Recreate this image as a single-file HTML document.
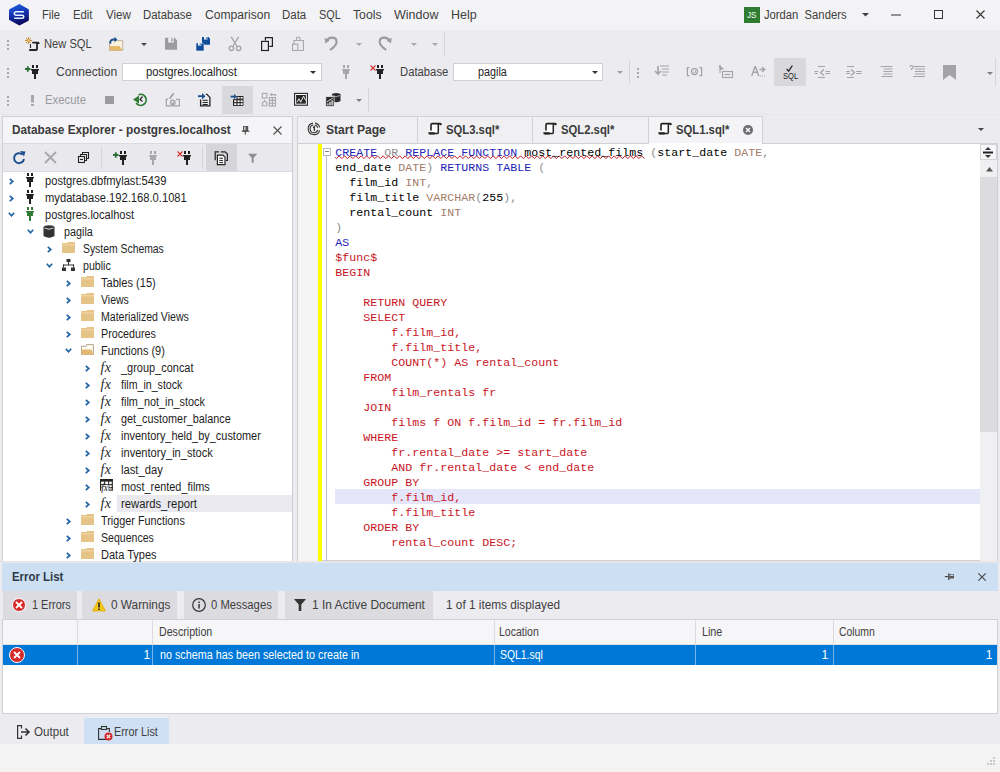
<!DOCTYPE html>
<html><head><meta charset="utf-8"><style>
html,body{margin:0;padding:0;}
body{width:1000px;height:772px;overflow:hidden;position:relative;background:#ececf0;font-family:"Liberation Sans",sans-serif;}
.a{position:absolute;}
.t{white-space:pre;line-height:1;}
svg{overflow:visible}
</style></head><body>
<div class="a" style="left:0px;top:0px;width:1000px;height:30px;background:#f3f3f5;"></div>
<svg class="a" style="left:7px;top:3px" width="24" height="24" viewBox="7 3 24 24"><defs><linearGradient id="lg" x1="0" y1="0" x2="0.3" y2="1"><stop offset="0" stop-color="#1f6ae8"/><stop offset="0.55" stop-color="#1630b0"/><stop offset="1" stop-color="#0b0b5e"/></linearGradient></defs><path d="M18.9,4.2 Q19.4,4 19.9,4.3 L28.5,9.3 Q28.9,9.6 28.9,10 V20 Q28.9,20.4 28.5,20.7 L19.4,25.6 L10.3,20.6 Q9,19.9 9,19.4 V10.3 Q9,9.6 9.5,9.3 Z" fill="url(#lg)"/><path d="M23.9,11.8 H16.2 Q14.3,11.8 14.3,13.6 Q14.3,15.2 16.2,15.2 H22 Q23.8,15.2 23.8,16.8 Q23.8,18.3 22,18.3 H14.2" fill="none" stroke="#e6f6ff" stroke-width="1.5"/></svg>
<div class="a" style="left:744px;top:7px;width:16px;height:16px;background:#2e7d32;"></div>
<svg class="a" style="left:862px;top:13px" width="7" height="4" viewBox="0 0 7 4"><polygon points="0,0 7,0 3.5,3.5" fill="#404040"/></svg>
<svg class="a" style="left:891px;top:14px" width="10" height="2" viewBox="0 0 10 2"><rect x="0" y="0.5" width="10" height="1" fill="#333"/></svg>
<svg class="a" style="left:934px;top:10px" width="9" height="9" viewBox="0 0 9 9"><rect x="0.5" y="0.5" width="8" height="8" fill="none" stroke="#333" stroke-width="1"/></svg>
<svg class="a" style="left:976px;top:10px" width="9" height="9" viewBox="0 0 9 9"><path d="M0.5,0.5 L8.5,8.5 M8.5,0.5 L0.5,8.5" stroke="#333" stroke-width="1.1"/></svg>
<svg class="a" style="left:7px;top:40px" width="2" height="10" viewBox="0 0 2 10"><rect x="0" y="0" width="2" height="2" fill="#a8a8ac"/><rect x="0" y="4" width="2" height="2" fill="#a8a8ac"/><rect x="0" y="8" width="2" height="2" fill="#a8a8ac"/></svg>
<svg class="a" style="left:22px;top:34px" width="20" height="20" viewBox="22 34 20 20"><g stroke="#c8892a" stroke-width="1"><path d="M28.4,37 V44 M25,40.5 H32 M26,38 L30.8,43 M30.8,38 L26,43"/></g><circle cx="28.4" cy="40.5" r="1" fill="#f3dca8"/><path d="M30.5,44.2 V48" stroke="#222" stroke-width="1.1"/><path d="M32.3,42.7 H38 Q38.8,42.7 38.8,44 M37,43 V49 Q37,50 36,50 H29.2" fill="none" stroke="#222" stroke-width="1.8"/></svg>
<svg class="a" style="left:106px;top:35px" width="20" height="18" viewBox="106 35 20 18"><path d="M109.5,41 V50.4 H122.7 V40.6 H116" fill="#fbf3e2" stroke="#b9ab8e" stroke-width="0.9"/><path d="M109.2,46 H119.5 L122.5,50.4 H110.5 Z" fill="#e3b96c"/><path d="M110.5,43.8 Q109.5,39.5 114,39.5 H115.5" fill="none" stroke="#1d4f8c" stroke-width="1.8"/><path d="M114.5,36.8 L117.3,39.6 L114.5,42.4 Z" fill="#1d4f8c"/></svg>
<svg class="a" style="left:140.5px;top:42.5px" width="6" height="3" viewBox="0 0 6 3"><polygon points="0,0 6,0 3,3" fill="#444"/></svg>
<svg class="a" style="left:163px;top:36px" width="16" height="16" viewBox="163 36 16 16"><path d="M165,37.7 H174.5 L177,40.2 V49.8 H165 Z" fill="#9c9ca0"/><rect x="168.2" y="37.7" width="5.5" height="4.9" fill="#ececf0"/><rect x="171.2" y="38.6" width="1.5" height="2.8" fill="#9c9ca0"/></svg>
<svg class="a" style="left:194px;top:35px" width="18" height="18" viewBox="194 35 18 18"><path d="M202,36.9 H208.5 L210,38.4 V44.8 H202 Z" fill="#0f4c9a"/><rect x="204" y="36.9" width="3.4" height="2.6" fill="#fff"/><rect x="205.7" y="37.3" width="1" height="1.6" fill="#0f4c9a"/><path d="M196,42.9 H202.5 L204,44.4 V50.9 H196 Z" fill="#0f4c9a" stroke="#ececf0" stroke-width="0.6"/><rect x="198" y="42.9" width="3.4" height="2.6" fill="#fff"/><rect x="199.7" y="43.3" width="1" height="1.6" fill="#0f4c9a"/></svg>
<svg class="a" style="left:228px;top:35px" width="14" height="17" viewBox="228 35 14 17"><g fill="none" stroke="#a4a4a8" stroke-width="1.3"><path d="M231.2,36.8 L237,46.5 M238.6,36.8 L232.8,46.5"/><circle cx="231.4" cy="48.3" r="2.2"/><circle cx="238.6" cy="48.3" r="2.2"/></g></svg>
<svg class="a" style="left:259px;top:35px" width="16" height="17" viewBox="259 35 16 17"><g fill="none" stroke="#222" stroke-width="1.2"><path d="M265.4,40.6 V37.6 H272.4 V46.4 H269.3"/><rect x="261.6" y="41.4" width="6.8" height="9.1"/></g></svg>
<svg class="a" style="left:290px;top:35px" width="16" height="17" viewBox="290 35 16 17"><g fill="none" stroke="#a8a8ac" stroke-width="1.1"><path d="M296.5,40.5 V38 Q296.5,37.3 297.5,37.3 H299 Q300,37.3 300,38 V40.5 M294,44 V40.5 H303.4 V50.5 H297.8"/><rect x="292.5" y="44.2" width="5.3" height="6.3"/></g></svg>
<svg class="a" style="left:321px;top:35px" width="20" height="18" viewBox="321 35 20 18"><path d="M326.5,40.8 Q328,37.6 332,37.6 Q336.6,37.6 336.6,42 Q336.6,45.5 330,50" fill="none" stroke="#9c9ca0" stroke-width="2.1"/><path d="M324.6,37.8 L329.6,40.6 L325.2,43.6 Z" fill="#9c9ca0"/></svg>
<svg class="a" style="left:355.5px;top:42.5px" width="6" height="3" viewBox="0 0 6 3"><polygon points="0,0 6,0 3,3" fill="#a8a8ac"/></svg>
<svg class="a" style="left:376px;top:35px" width="20" height="18" viewBox="376 35 20 18"><g transform="translate(716.25,0) scale(-1,1)"><path d="M326.5,40.8 Q328,37.6 332,37.6 Q336.6,37.6 336.6,42 Q336.6,45.5 330,50" fill="none" stroke="#9c9ca0" stroke-width="2.1"/><path d="M324.6,37.8 L329.6,40.6 L325.2,43.6 Z" fill="#9c9ca0"/></g></svg>
<svg class="a" style="left:411px;top:42.5px" width="6" height="3" viewBox="0 0 6 3"><polygon points="0,0 6,0 3,3" fill="#a8a8ac"/></svg>
<svg class="a" style="left:432px;top:42.5px" width="6" height="3" viewBox="0 0 6 3"><polygon points="0,0 6,0 3,3" fill="#a8a8ac"/></svg>
<div class="a" style="left:444px;top:32px;width:1px;height:24px;background:#d6d6da;"></div>
<svg class="a" style="left:7px;top:68px" width="2" height="10" viewBox="0 0 2 10"><rect x="0" y="0" width="2" height="2" fill="#a8a8ac"/><rect x="0" y="4" width="2" height="2" fill="#a8a8ac"/><rect x="0" y="8" width="2" height="2" fill="#a8a8ac"/></svg>
<svg class="a" style="left:31px;top:65px" width="8" height="14" viewBox="0 0 8 14"><g fill="#222"><rect x="1" y="0" width="2" height="3"/><rect x="5" y="0" width="2" height="3"/><rect x="0" y="4" width="8" height="1.4"/><rect x="1" y="4" width="6" height="5"/><rect x="3" y="9" width="2" height="5"/></g></svg>
<svg class="a" style="left:25px;top:65.5px" width="6" height="6" viewBox="0 0 6 6"><path d="M0,3 H5.6 M2.8,0.2 V5.8" stroke="#2e6e38" stroke-width="1.8"/></svg>
<div class="a" style="left:122px;top:63px;width:200px;height:18px;background:#ffffff;border:1px solid #d0d0d4;box-sizing:border-box;"></div>
<svg class="a" style="left:310px;top:71px" width="6" height="3" viewBox="0 0 6 3"><polygon points="0,0 6,0 3,3" fill="#333"/></svg>
<svg class="a" style="left:342px;top:65px" width="8" height="14" viewBox="0 0 8 14"><g fill="#a8a8ac"><rect x="1" y="0" width="2" height="3"/><rect x="5" y="0" width="2" height="3"/><rect x="0" y="4" width="8" height="1.4"/><rect x="1" y="4" width="6" height="5"/><rect x="3" y="9" width="2" height="5"/></g></svg>
<svg class="a" style="left:376px;top:65px" width="8" height="14" viewBox="0 0 8 14"><g fill="#222"><rect x="1" y="0" width="2" height="3"/><rect x="5" y="0" width="2" height="3"/><rect x="0" y="4" width="8" height="1.4"/><rect x="1" y="4" width="6" height="5"/><rect x="3" y="9" width="2" height="5"/></g></svg>
<svg class="a" style="left:370px;top:65px" width="6" height="6" viewBox="0 0 6 6"><path d="M0.5,0.5 L5.5,5.5 M5.5,0.5 L0.5,5.5" stroke="#d03030" stroke-width="1.1"/></svg>
<div class="a" style="left:453px;top:63px;width:150px;height:18px;background:#ffffff;border:1px solid #d0d0d4;box-sizing:border-box;"></div>
<svg class="a" style="left:591.5px;top:71px" width="6" height="3" viewBox="0 0 6 3"><polygon points="0,0 6,0 3,3" fill="#333"/></svg>
<svg class="a" style="left:617px;top:71px" width="6" height="3" viewBox="0 0 6 3"><polygon points="0,0 6,0 3,3" fill="#a0a0a4"/></svg>
<div class="a" style="left:629px;top:60px;width:1px;height:24px;background:#d6d6da;"></div>
<svg class="a" style="left:637px;top:68px" width="2" height="10" viewBox="0 0 2 10"><rect x="0" y="0" width="2" height="2" fill="#a8a8ac"/><rect x="0" y="4" width="2" height="2" fill="#a8a8ac"/><rect x="0" y="8" width="2" height="2" fill="#a8a8ac"/></svg>
<svg class="a" style="left:654px;top:65px" width="16" height="12" viewBox="0 0 16 12"><g stroke="#a4a4a8" stroke-width="1.2" fill="none"><path d="M6,1 H15 M8,4 H15 M8,7 H15 M8,10 H13"/><path d="M4,1 V9 M1,6 L4,9 L7,6" stroke-width="1.6"/></g></svg>
<svg class="a" style="left:685px;top:65px" width="18" height="13" viewBox="685 65 18 13"><g fill="none" stroke="#a0a0a4" stroke-width="1.2"><path d="M689.5,67.6 H687.4 V75.6 H689.5 M699.5,67.6 H701.6 V75.6 H699.5"/><circle cx="694.5" cy="71.6" r="3"/><path d="M693.5,71.6 A1,1 0 1 0 695.5,71.6 V70.4" stroke-width="1"/></g></svg>
<svg class="a" style="left:719px;top:65px" width="14" height="13" viewBox="0 0 14 13"><g stroke="#a4a4a8" stroke-width="1.1" fill="none"><path d="M1,0 V8"/><rect x="3.5" y="6.5" width="10" height="6"/><path d="M5.5,9.5 H11.5"/></g><path d="M0,0 L5,4 L1,5 Z" fill="#a4a4a8"/></svg>
<svg class="a" style="left:751px;top:66px" width="15" height="11" viewBox="0 0 15 11"><g fill="#a4a4a8"><path d="M0,10 L3.5,0 H5 L8.5,10 H7 L6,7 H2.5 L1.5,10 Z M3,5.5 H5.5 L4.2,2 Z"/><rect x="11" y="9.5" width="1" height="1"/><rect x="13" y="9.5" width="1" height="1"/><rect x="9" y="9.5" width="1" height="1"/></g><path d="M8.5,3.5 H13.5 M11,1 L13.8,3.5 L11,6" stroke="#a4a4a8" stroke-width="1.3" fill="none"/></svg>
<div class="a" style="left:774px;top:58px;width:32px;height:28px;background:#d9d9dd;"></div>
<svg class="a" style="left:785.5px;top:64.5px" width="7" height="7" viewBox="0 0 7 7"><path d="M0.6,3.8 L2.6,6.2 L6.4,0.5" fill="none" stroke="#222" stroke-width="1.3"/></svg>
<svg class="a" style="left:812px;top:62px" width="20" height="18" viewBox="812 62 20 18"><g stroke="#a4a4a8" stroke-width="1" fill="none"><path d="M818,66.5 H825 M814.5,71.5 H818 M814.5,73.5 H818 M825.5,71.5 H830 M825.5,73.5 H830 M818,77.5 H825"/><path d="M824,69.5 L820.5,72.5 L824,75.5" stroke-width="1.3"/></g></svg>
<svg class="a" style="left:844px;top:62px" width="20" height="18" viewBox="844 62 20 18"><g stroke="#a4a4a8" stroke-width="1" fill="none"><path d="M847,66.5 H854 M846,71.5 H850 M846,73.5 H850 M856,71.5 H861.5 M856,73.5 H861.5 M847,77.5 H854"/><path d="M851,69.5 L854.5,72.5 L851,75.5" stroke-width="1.3"/></g></svg>
<svg class="a" style="left:878px;top:62px" width="17" height="18" viewBox="878 62 17 18"><g stroke="#a4a4a8" stroke-width="1" fill="none"><path d="M880.5,66.5 H892.5 M883.5,69 H892.5 M883.5,71.5 H892.5 M883.5,74 H892.5 M881.5,76.5 H892.5"/></g></svg>
<svg class="a" style="left:907px;top:62px" width="20" height="18" viewBox="907 62 20 18"><g stroke="#a4a4a8" stroke-width="1" fill="none"><path d="M914,66.5 H925 M915,69 H925 M915,71.5 H925 M915,74 H925 M913,76.5 H925"/><path d="M910,67 Q910,65.5 911.6,65.5 Q913.2,65.5 913.2,67 Q913.2,68.2 911.6,68.8 V70" stroke-width="1.2"/></g></svg>
<svg class="a" style="left:943px;top:65px" width="13" height="15" viewBox="0 0 13 15"><path d="M0,0 H13 V15 L6.5,10 L0,15 Z" fill="#a4a4a8"/></svg>
<svg class="a" style="left:987px;top:71.5px" width="6" height="3" viewBox="0 0 6 3"><polygon points="0,0 6,0 3,3" fill="#808084"/></svg>
<div class="a" style="left:995px;top:58px;width:1px;height:28px;background:#d6d6da;"></div>
<svg class="a" style="left:7px;top:95.5px" width="2" height="10" viewBox="0 0 2 10"><rect x="0" y="0" width="2" height="2" fill="#a8a8ac"/><rect x="0" y="4" width="2" height="2" fill="#a8a8ac"/><rect x="0" y="8" width="2" height="2" fill="#a8a8ac"/></svg>
<svg class="a" style="left:30.5px;top:94.5px" width="3" height="11" viewBox="0 0 3 11"><rect x="0" y="0" width="3" height="7.5" fill="#a8a8ac"/><rect x="0" y="9" width="3" height="2" fill="#a8a8ac"/></svg>
<div class="a" style="left:104.5px;top:95.8px;width:9px;height:8.5px;background:#9c9ca0;"></div>
<svg class="a" style="left:133px;top:92.5px" width="16" height="13" viewBox="0 0 16 13"><path d="M5.5,1.8 A5.5,5.5 0 1 1 3.2,10" fill="none" stroke="#2f7d32" stroke-width="1.8"/><polygon points="0,6.5 6,2.5 6,10.5" fill="#2f7d32"/><path d="M9.5,3.5 L7,6.5 L9.5,8.5" fill="none" stroke="#222" stroke-width="1.2"/></svg>
<svg class="a" style="left:164px;top:90px" width="18" height="18" viewBox="164 90 18 18"><g fill="none" stroke="#a4a4a8" stroke-width="1.2"><path d="M168,99.3 H166.3 V105.8 H179.4 V99.3 H176"/><circle cx="172.8" cy="102.5" r="2.3"/><path d="M171.8,102.5 A1,1 0 1 0 173.8,102.5 V101.8"/></g><path d="M169.5,98.8 L173.8,93.2" stroke="#a4a4a8" stroke-width="1.8"/></svg>
<svg class="a" style="left:196px;top:91px" width="17" height="17" viewBox="196 91 17 17"><path d="M198,96.2 H202.5" stroke="#1d4f8c" stroke-width="1.9"/><path d="M202,93 L205.5,96.2 L202,99.4 Z" fill="#1d4f8c"/><g fill="none" stroke="#222" stroke-width="1.3"><path d="M200.6,99.5 V105.8 H209.9 V97.4 L207,94.4 H205.8"/><path d="M202.6,100.3 H207.8 M202.6,102.5 H207.8 M202.6,104.5 H207.8" stroke-width="1"/></g></svg>
<div class="a" style="left:222px;top:86px;width:31px;height:28px;background:#d9d9dd;"></div>
<svg class="a" style="left:228px;top:90px" width="18" height="18" viewBox="228 90 18 18"><g fill="#222"><path d="M233,99.2 H243.4 V105.9 H233 Z"/><path d="M236.6,96 H243.4 V99.5 H236.6 Z"/></g><g fill="#fff"><rect x="237.6" y="97" width="2" height="1.6"/><rect x="240.6" y="97" width="2" height="1.6"/><rect x="234.2" y="100.3" width="2.2" height="1.8"/><rect x="237.6" y="100.3" width="2" height="1.8"/><rect x="240.6" y="100.3" width="2" height="1.8"/><rect x="234.2" y="103.2" width="2.2" height="1.8"/><rect x="237.6" y="103.2" width="2" height="1.8"/><rect x="240.6" y="103.2" width="2" height="1.8"/></g><path d="M230.6,96.6 H234.6" stroke="#1d4f8c" stroke-width="1.8"/><path d="M234,94 L237,96.6 L234,99.2 Z" fill="#1d4f8c"/></svg>
<svg class="a" style="left:260px;top:91px" width="18" height="17" viewBox="260 91 18 17"><g fill="none" stroke="#a8a8ac" stroke-width="1.1"><rect x="262.3" y="93.4" width="4.6" height="4.6"/><path d="M264.6,99.8 V101 M262.3,105.8 V103 L264.6,101 L266.9,103 V105.8 Z"/><rect x="269.3" y="97.6" width="6.2" height="8.4"/><path d="M269.3,100.4 H275.5 M269.3,103.2 H275.5 M272.4,97.6 V106 M271,94.6 H275.5 V96 M272,93.4 L270.6,94.6 L272,95.8"/></g></svg>
<svg class="a" style="left:292px;top:91px" width="18" height="17" viewBox="292 91 18 17"><rect x="294.6" y="93.4" width="12.8" height="11.8" fill="#fff" stroke="#222" stroke-width="1.1"/><rect x="296.1" y="95" width="9.8" height="8.7" fill="#2a2a2a"/><path d="M297,102.2 L299,98.8 L300.6,102.2 L303.6,96.2 L305.6,100.4" fill="none" stroke="#fff" stroke-width="0.9"/></svg>
<svg class="a" style="left:324px;top:91px" width="18" height="17" viewBox="324 91 18 17"><ellipse cx="336.2" cy="94.8" rx="4.3" ry="1.8" fill="#2a2a2a"/><path d="M331.9,94.8 V101 Q336.2,103.4 340.5,101 V94.8 Z" fill="#2a2a2a"/><path d="M332.3,95.6 Q336.2,97.6 340.1,95.6" fill="none" stroke="#fff" stroke-width="0.6"/><rect x="325.8" y="96.6" width="8.3" height="10" fill="#2a2a2a" stroke="#ececf0" stroke-width="0.8"/><g fill="#fff"><rect x="327.3" y="103.4" width="1.2" height="2"/><rect x="329.4" y="101.8" width="1.2" height="3.6"/><rect x="331.5" y="100.2" width="1.2" height="5.2"/></g><path d="M327,101.8 L332.8,98" stroke="#fff" stroke-width="0.8"/></svg>
<svg class="a" style="left:355.5px;top:99px" width="6" height="3" viewBox="0 0 6 3"><polygon points="0,0 6,0 3,3" fill="#808084"/></svg>
<div class="a" style="left:368px;top:88px;width:1px;height:24px;background:#d6d6da;"></div>
<div class="a" style="left:0px;top:114px;width:1000px;height:1px;background:#e8e8ec;"></div>
<div class="a" style="left:2px;top:116px;width:291px;height:446px;background:#ffffff;border:1px solid #d0d0d4;box-sizing:border-box;"></div>
<div class="a" style="left:3px;top:117px;width:289px;height:26px;background:#f5f5f8;"></div>
<svg class="a" style="left:240px;top:124px" width="12" height="12" viewBox="240 124 12 12"><rect x="243" y="126" width="5.2" height="5" fill="#555"/><rect x="244.3" y="126.8" width="1.2" height="3.5" fill="#f5f5f8"/><rect x="241.8" y="130.6" width="7.5" height="1.2" fill="#444"/><rect x="244.7" y="131" width="1.1" height="3.5" fill="#444"/></svg>
<svg class="a" style="left:273px;top:126px" width="9" height="9" viewBox="0 0 9 9"><path d="M0.5,0.5 L8.5,8.5 M8.5,0.5 L0.5,8.5" stroke="#555" stroke-width="1.2"/></svg>
<div class="a" style="left:3px;top:143px;width:289px;height:29px;background:#e9e9ed;"></div>
<div class="a" style="left:3px;top:143px;width:289px;height:1px;background:#dcdce0;"></div>
<div class="a" style="left:3px;top:171px;width:289px;height:1px;background:#dcdce0;"></div>
<svg class="a" style="left:12.5px;top:151px" width="13" height="14" viewBox="0 0 13 14"><path d="M9.5,3.5 A5,5 0 1 0 11,8" fill="none" stroke="#1d4f8e" stroke-width="2"/><polygon points="7,0 12.5,0.5 11,5.5" fill="#1d4f8e"/></svg>
<svg class="a" style="left:43.5px;top:151px" width="13" height="13" viewBox="0 0 13 13"><path d="M1,1 L12,12 M12,1 L1,12" stroke="#a8a8ac" stroke-width="1.8"/></svg>
<svg class="a" style="left:78px;top:152px" width="11" height="11" viewBox="0 0 11 11"><g fill="none" stroke="#222" stroke-width="1.1"><rect x="0.5" y="4.5" width="6" height="6"/><path d="M2.5,4.5 V2.5 H8.5 V8.5 H6.5 M4.5,2.5 V0.5 H10.5 V6.5 H8.5"/><path d="M2,7.5 H5"/></g></svg>
<div class="a" style="left:101px;top:146px;width:1px;height:23px;background:#d6d6da;"></div>
<svg class="a" style="left:119px;top:151px" width="8" height="14" viewBox="0 0 8 14"><g fill="#222"><rect x="1" y="0" width="2" height="3"/><rect x="5" y="0" width="2" height="3"/><rect x="0" y="4" width="8" height="1.4"/><rect x="1" y="4" width="6" height="5"/><rect x="3" y="9" width="2" height="5"/></g></svg>
<svg class="a" style="left:113px;top:151.5px" width="6" height="6" viewBox="0 0 6 6"><path d="M0,3 H5.6 M2.8,0.2 V5.8" stroke="#2e6e38" stroke-width="1.8"/></svg>
<svg class="a" style="left:148.5px;top:151px" width="8" height="14" viewBox="0 0 8 14"><g fill="#a8a8ac"><rect x="1" y="0" width="2" height="3"/><rect x="5" y="0" width="2" height="3"/><rect x="0" y="4" width="8" height="1.4"/><rect x="1" y="4" width="6" height="5"/><rect x="3" y="9" width="2" height="5"/></g></svg>
<svg class="a" style="left:183px;top:151px" width="8" height="14" viewBox="0 0 8 14"><g fill="#222"><rect x="1" y="0" width="2" height="3"/><rect x="5" y="0" width="2" height="3"/><rect x="0" y="4" width="8" height="1.4"/><rect x="1" y="4" width="6" height="5"/><rect x="3" y="9" width="2" height="5"/></g></svg>
<svg class="a" style="left:177px;top:151px" width="6" height="6" viewBox="0 0 6 6"><path d="M0.5,0.5 L5.5,5.5 M5.5,0.5 L0.5,5.5" stroke="#d03030" stroke-width="1.1"/></svg>
<div class="a" style="left:202px;top:146px;width:1px;height:23px;background:#d6d6da;"></div>
<div class="a" style="left:205.5px;top:144px;width:31px;height:27px;background:#d6d6da;"></div>
<svg class="a" style="left:212px;top:149px" width="18" height="18" viewBox="212 149 18 18"><g fill="none" stroke="#222" stroke-width="1.2"><path d="M215.2,160.2 V151.8 H218.9 M220.8,151.8 H225 L227.4,154 V160.5 H226"/></g><path d="M217.4,155.2 H223 L225,157.2 V164.6 H217.4 Z" fill="#fff" stroke="#222" stroke-width="1.2"/><path d="M219.3,158.2 H223 M219.3,160.4 H223 M219.3,162.6 H223" stroke="#222" stroke-width="1"/></svg>
<svg class="a" style="left:246px;top:152px" width="13" height="13" viewBox="246 152 13 13"><path d="M248.1,153.8 H257.2 L253.6,158 V162.8 H251.7 V158 Z" fill="#8e8e92"/></svg>
<svg class="a" style="left:9px;top:177.5px" width="5" height="7" viewBox="0 0 5 7"><path d="M0.8,0.8 L3.8,3.5 L0.8,6.2" fill="none" stroke="#1f65a8" stroke-width="1.7"/></svg>
<svg class="a" style="left:26px;top:173px" width="8" height="14" viewBox="0 0 8 14"><g fill="#222"><rect x="1" y="0" width="2" height="3"/><rect x="5" y="0" width="2" height="3"/><rect x="0" y="4" width="8" height="1.4"/><rect x="1" y="4" width="6" height="5"/><rect x="3" y="9" width="2" height="5"/></g></svg>
<svg class="a" style="left:9px;top:194.5px" width="5" height="7" viewBox="0 0 5 7"><path d="M0.8,0.8 L3.8,3.5 L0.8,6.2" fill="none" stroke="#1f65a8" stroke-width="1.7"/></svg>
<svg class="a" style="left:26px;top:190px" width="8" height="14" viewBox="0 0 8 14"><g fill="#222"><rect x="1" y="0" width="2" height="3"/><rect x="5" y="0" width="2" height="3"/><rect x="0" y="4" width="8" height="1.4"/><rect x="1" y="4" width="6" height="5"/><rect x="3" y="9" width="2" height="5"/></g></svg>
<svg class="a" style="left:8px;top:212px" width="7" height="5" viewBox="0 0 7 5"><path d="M0.8,0.8 L3.5,3.8 L6.2,0.8" fill="none" stroke="#1f65a8" stroke-width="1.7"/></svg>
<svg class="a" style="left:26px;top:207px" width="8" height="14" viewBox="0 0 8 14"><g fill="#2f7a35"><rect x="1" y="0" width="2" height="3"/><rect x="5" y="0" width="2" height="3"/><rect x="0" y="4" width="8" height="1.4"/><rect x="1" y="4" width="6" height="5"/><rect x="3" y="9" width="2" height="5"/></g></svg>
<svg class="a" style="left:27px;top:229px" width="7" height="5" viewBox="0 0 7 5"><path d="M0.8,0.8 L3.5,3.8 L6.2,0.8" fill="none" stroke="#1f65a8" stroke-width="1.7"/></svg>
<svg class="a" style="left:43px;top:225px" width="12" height="14" viewBox="0 0 12 14"><ellipse cx="6" cy="2.5" rx="5.5" ry="2.3" fill="#333"/><path d="M0.5,2.5 V11 Q6,14.5 11.5,11 V2.5 Q6,6 0.5,2.5 Z" fill="#333"/><path d="M1.5,3 Q6,5.5 10.5,3" stroke="#fff" stroke-width="0.8" fill="none"/></svg>
<svg class="a" style="left:47px;top:245.5px" width="5" height="7" viewBox="0 0 5 7"><path d="M0.8,0.8 L3.8,3.5 L0.8,6.2" fill="none" stroke="#1f65a8" stroke-width="1.7"/></svg>
<svg class="a" style="left:61.8px;top:242.2px" width="13" height="11" viewBox="0 0 13 11"><path d="M0,1 H5 L6,0 H13 V11 H0 Z" fill="#e6c387"/><rect x="0" y="2.5" width="13" height="0.8" fill="#f3dfb5"/></svg>
<svg class="a" style="left:46px;top:263px" width="7" height="5" viewBox="0 0 7 5"><path d="M0.8,0.8 L3.5,3.8 L6.2,0.8" fill="none" stroke="#1f65a8" stroke-width="1.7"/></svg>
<svg class="a" style="left:62px;top:259px" width="13" height="12" viewBox="0 0 13 12"><g fill="#333"><rect x="4.5" y="0" width="4" height="3"/><rect x="6" y="3" width="1" height="3"/><rect x="1" y="5.5" width="11" height="1"/><rect x="1" y="5.5" width="1" height="3"/><rect x="11" y="5.5" width="1" height="3"/><rect x="0" y="8.5" width="4" height="3.5"/><rect x="9" y="8.5" width="4" height="3.5"/></g></svg>
<svg class="a" style="left:66px;top:279.5px" width="5" height="7" viewBox="0 0 5 7"><path d="M0.8,0.8 L3.8,3.5 L0.8,6.2" fill="none" stroke="#1f65a8" stroke-width="1.7"/></svg>
<svg class="a" style="left:80.8px;top:276.2px" width="13" height="11" viewBox="0 0 13 11"><path d="M0,1 H5 L6,0 H13 V11 H0 Z" fill="#e6c387"/><rect x="0" y="2.5" width="13" height="0.8" fill="#f3dfb5"/></svg>
<svg class="a" style="left:66px;top:296.5px" width="5" height="7" viewBox="0 0 5 7"><path d="M0.8,0.8 L3.8,3.5 L0.8,6.2" fill="none" stroke="#1f65a8" stroke-width="1.7"/></svg>
<svg class="a" style="left:80.8px;top:293.2px" width="13" height="11" viewBox="0 0 13 11"><path d="M0,1 H5 L6,0 H13 V11 H0 Z" fill="#e6c387"/><rect x="0" y="2.5" width="13" height="0.8" fill="#f3dfb5"/></svg>
<svg class="a" style="left:66px;top:313.5px" width="5" height="7" viewBox="0 0 5 7"><path d="M0.8,0.8 L3.8,3.5 L0.8,6.2" fill="none" stroke="#1f65a8" stroke-width="1.7"/></svg>
<svg class="a" style="left:80.8px;top:310.2px" width="13" height="11" viewBox="0 0 13 11"><path d="M0,1 H5 L6,0 H13 V11 H0 Z" fill="#e6c387"/><rect x="0" y="2.5" width="13" height="0.8" fill="#f3dfb5"/></svg>
<svg class="a" style="left:66px;top:330.5px" width="5" height="7" viewBox="0 0 5 7"><path d="M0.8,0.8 L3.8,3.5 L0.8,6.2" fill="none" stroke="#1f65a8" stroke-width="1.7"/></svg>
<svg class="a" style="left:80.8px;top:327.2px" width="13" height="11" viewBox="0 0 13 11"><path d="M0,1 H5 L6,0 H13 V11 H0 Z" fill="#e6c387"/><rect x="0" y="2.5" width="13" height="0.8" fill="#f3dfb5"/></svg>
<svg class="a" style="left:65px;top:348px" width="7" height="5" viewBox="0 0 7 5"><path d="M0.8,0.8 L3.5,3.8 L6.2,0.8" fill="none" stroke="#1f65a8" stroke-width="1.7"/></svg>
<svg class="a" style="left:80.8px;top:344.2px" width="13" height="11" viewBox="0 0 13 11"><path d="M0.5,2.3 H5 L5.6,0.6 H12.4 V10.4 H0.5 Z" fill="#fffdf6" stroke="#a89a80" stroke-width="0.9"/><path d="M0,5.6 H10.5 L12.4,10.8 H0.8 Z" fill="#e3b872"/></svg>
<svg class="a" style="left:85px;top:364.5px" width="5" height="7" viewBox="0 0 5 7"><path d="M0.8,0.8 L3.8,3.5 L0.8,6.2" fill="none" stroke="#1f65a8" stroke-width="1.7"/></svg>
<svg class="a" style="left:85px;top:381.5px" width="5" height="7" viewBox="0 0 5 7"><path d="M0.8,0.8 L3.8,3.5 L0.8,6.2" fill="none" stroke="#1f65a8" stroke-width="1.7"/></svg>
<svg class="a" style="left:85px;top:398.5px" width="5" height="7" viewBox="0 0 5 7"><path d="M0.8,0.8 L3.8,3.5 L0.8,6.2" fill="none" stroke="#1f65a8" stroke-width="1.7"/></svg>
<svg class="a" style="left:85px;top:415.5px" width="5" height="7" viewBox="0 0 5 7"><path d="M0.8,0.8 L3.8,3.5 L0.8,6.2" fill="none" stroke="#1f65a8" stroke-width="1.7"/></svg>
<svg class="a" style="left:85px;top:432.5px" width="5" height="7" viewBox="0 0 5 7"><path d="M0.8,0.8 L3.8,3.5 L0.8,6.2" fill="none" stroke="#1f65a8" stroke-width="1.7"/></svg>
<svg class="a" style="left:85px;top:449.5px" width="5" height="7" viewBox="0 0 5 7"><path d="M0.8,0.8 L3.8,3.5 L0.8,6.2" fill="none" stroke="#1f65a8" stroke-width="1.7"/></svg>
<svg class="a" style="left:85px;top:466.5px" width="5" height="7" viewBox="0 0 5 7"><path d="M0.8,0.8 L3.8,3.5 L0.8,6.2" fill="none" stroke="#1f65a8" stroke-width="1.7"/></svg>
<svg class="a" style="left:85px;top:483.5px" width="5" height="7" viewBox="0 0 5 7"><path d="M0.8,0.8 L3.8,3.5 L0.8,6.2" fill="none" stroke="#1f65a8" stroke-width="1.7"/></svg>
<svg class="a" style="left:100px;top:479.1px" width="13" height="12" viewBox="0 0 13 12"><g fill="#222"><rect x="0" y="0" width="12.8" height="2.6"/><rect x="0" y="0" width="1.1" height="11.4"/><rect x="11.7" y="0" width="1.1" height="11.4"/><rect x="0" y="5.2" width="12.8" height="1"/><rect x="0" y="8.2" width="12.8" height="1"/><rect x="0" y="10.6" width="12.8" height="1"/><rect x="4.2" y="0" width="1" height="11.4"/><rect x="8.2" y="0" width="1" height="11.4"/></g><path d="M2.2,6.2 H8.6 V12.6 H1 Z" fill="#fff"/><text x="1.2" y="11.8" font-family="Liberation Serif" font-style="italic" font-size="9.5" fill="#111">fx</text></svg>
<div class="a" style="left:117px;top:495px;width:175px;height:17px;background:#e9e9ef;"></div>
<svg class="a" style="left:85px;top:500.5px" width="5" height="7" viewBox="0 0 5 7"><path d="M0.8,0.8 L3.8,3.5 L0.8,6.2" fill="none" stroke="#1f65a8" stroke-width="1.7"/></svg>
<svg class="a" style="left:66px;top:517.5px" width="5" height="7" viewBox="0 0 5 7"><path d="M0.8,0.8 L3.8,3.5 L0.8,6.2" fill="none" stroke="#1f65a8" stroke-width="1.7"/></svg>
<svg class="a" style="left:80.8px;top:514.2px" width="13" height="11" viewBox="0 0 13 11"><path d="M0,1 H5 L6,0 H13 V11 H0 Z" fill="#e6c387"/><rect x="0" y="2.5" width="13" height="0.8" fill="#f3dfb5"/></svg>
<svg class="a" style="left:66px;top:534.5px" width="5" height="7" viewBox="0 0 5 7"><path d="M0.8,0.8 L3.8,3.5 L0.8,6.2" fill="none" stroke="#1f65a8" stroke-width="1.7"/></svg>
<svg class="a" style="left:80.8px;top:531.2px" width="13" height="11" viewBox="0 0 13 11"><path d="M0,1 H5 L6,0 H13 V11 H0 Z" fill="#e6c387"/><rect x="0" y="2.5" width="13" height="0.8" fill="#f3dfb5"/></svg>
<svg class="a" style="left:66px;top:551.5px" width="5" height="7" viewBox="0 0 5 7"><path d="M0.8,0.8 L3.8,3.5 L0.8,6.2" fill="none" stroke="#1f65a8" stroke-width="1.7"/></svg>
<svg class="a" style="left:80.8px;top:548.2px" width="13" height="11" viewBox="0 0 13 11"><path d="M0,1 H5 L6,0 H13 V11 H0 Z" fill="#e6c387"/><rect x="0" y="2.5" width="13" height="0.8" fill="#f3dfb5"/></svg>
<div class="a" style="left:297px;top:116px;width:121px;height:28px;background:#f0f0f3;border:1px solid #d2d2d6;box-sizing:border-box;"></div>
<div class="a" style="left:417px;top:116px;width:116px;height:28px;background:#f0f0f3;border:1px solid #d2d2d6;box-sizing:border-box;"></div>
<div class="a" style="left:532px;top:116px;width:117px;height:28px;background:#f0f0f3;border:1px solid #d2d2d6;box-sizing:border-box;"></div>
<div class="a" style="left:648px;top:116px;width:115px;height:28px;background:#f4f4f6;border:1px solid #d2d2d6;box-sizing:border-box;border-bottom:none;"></div>
<svg class="a" style="left:306px;top:121px" width="16" height="16" viewBox="306 121 16 16"><g fill="none" stroke="#333" stroke-width="1.1"><path d="M319.6,130.3 A5.8,5.8 0 1 1 313,123.1 M315,123.1 A5.8,5.8 0 0 1 319.6,127.3 M317.77,129.81 A3.9,3.9 0 1 1 313.32,124.96 M314.68,124.96 A3.9,3.9 0 0 1 317.77,127.79"/><path d="M313,127.6 L314.4,126.8 V131" stroke-width="1.3"/></g></svg>
<svg class="a" style="left:425px;top:119px" width="20" height="20" viewBox="0 0 20 20"><g transform="translate(-425,-119)"><rect x="431.5" y="124.4" width="6.5" height="8.2" fill="#ffffff"/><path d="M431,130.4 V124.8 Q431,123.6 432.2,123.6 H440.6" fill="none" stroke="#222" stroke-width="1.6"/><circle cx="440.6" cy="124.1" r="1.2" fill="#222"/><path d="M438.3,123.6 V132.6 Q438.3,133.5 437.4,133.5 H430" fill="none" stroke="#222" stroke-width="1.5"/><path d="M428.4,132.3 H434.6 V134.6 H429.6 Q428.4,134.6 428.4,133.5 Z" fill="#222"/></g></svg>
<svg class="a" style="left:540px;top:119px" width="20" height="20" viewBox="0 0 20 20"><g transform="translate(-425,-119)"><rect x="431.5" y="124.4" width="6.5" height="8.2" fill="#ffffff"/><path d="M431,130.4 V124.8 Q431,123.6 432.2,123.6 H440.6" fill="none" stroke="#222" stroke-width="1.6"/><circle cx="440.6" cy="124.1" r="1.2" fill="#222"/><path d="M438.3,123.6 V132.6 Q438.3,133.5 437.4,133.5 H430" fill="none" stroke="#222" stroke-width="1.5"/><path d="M428.4,132.3 H434.6 V134.6 H429.6 Q428.4,134.6 428.4,133.5 Z" fill="#222"/></g></svg>
<svg class="a" style="left:654.5px;top:119px" width="20" height="20" viewBox="0 0 20 20"><g transform="translate(-425,-119)"><rect x="431.5" y="124.4" width="6.5" height="8.2" fill="#ffffff"/><path d="M431,130.4 V124.8 Q431,123.6 432.2,123.6 H440.6" fill="none" stroke="#222" stroke-width="1.6"/><circle cx="440.6" cy="124.1" r="1.2" fill="#222"/><path d="M438.3,123.6 V132.6 Q438.3,133.5 437.4,133.5 H430" fill="none" stroke="#222" stroke-width="1.5"/><path d="M428.4,132.3 H434.6 V134.6 H429.6 Q428.4,134.6 428.4,133.5 Z" fill="#222"/></g></svg>
<svg class="a" style="left:743px;top:125px" width="10" height="10" viewBox="0 0 10 10"><circle cx="5" cy="5" r="5" fill="#6e6e72"/><path d="M3,3 L7,7 M7,3 L3,7" stroke="#fff" stroke-width="1.2"/></svg>
<svg class="a" style="left:978px;top:128px" width="6" height="3" viewBox="0 0 6 3"><polygon points="0,0 6,0 3,3" fill="#444"/></svg>
<div class="a" style="left:297px;top:143px;width:701px;height:418px;background:#ffffff;border:1px solid #d0d0d4;box-sizing:border-box;"></div>
<div class="a" style="left:649px;top:143px;width:113px;height:1px;background:#ffffff;"></div>
<div class="a" style="left:298px;top:144px;width:20px;height:417px;background:#f5f5f5;"></div>
<div class="a" style="left:318px;top:144px;width:4px;height:417px;background:#ffff00;"></div>
<div class="a" style="left:326px;top:156px;width:1px;height:405px;background:#c0c0c4;"></div>
<div class="a" style="left:322.5px;top:147.5px;width:8px;height:8px;background:#ffffff;border:1px solid #b8b8bc;box-sizing:border-box;"></div>
<div class="a" style="left:324.5px;top:151px;width:4px;height:1px;background:#808084;"></div>
<div class="a" style="left:335px;top:489px;width:645px;height:15px;background:#e6e6fa;"></div>
<div class="a" style="left:980px;top:144px;width:17px;height:16px;background:#f7f7f9;border:1px solid #d4d4d8;box-sizing:border-box;"></div>
<svg class="a" style="left:983px;top:147px" width="10" height="11" viewBox="0 0 10 11"><polygon points="5,0 8,3 2,3" fill="#333"/><rect x="0" y="4.5" width="10" height="2" fill="#222"/><polygon points="5,11 8,8 2,8" fill="#333"/></svg>
<div class="a" style="left:980px;top:160px;width:17px;height:401px;background:#f0f0f2;"></div>
<svg class="a" style="left:985.5px;top:166.5px" width="7" height="4.5" viewBox="0 0 7 4.5"><polygon points="3.5,0 7,4.5 0,4.5" fill="#555"/></svg>
<div class="a" style="left:980px;top:177px;width:17px;height:255px;background:#dcdcde;"></div>
<svg class="a" style="left:0px;top:0px" width="1000" height="200" viewBox="0 0 1000 200"><path d="M335,157.2 L336.38,158.6L339.12,155.8L341.88,158.6L344.62,155.8L347.38,158.6L350.12,155.8L352.88,158.6L355.62,155.8L358.38,158.6L361.12,155.8L363.88,158.6L366.62,155.8L369.38,158.6L372.12,155.8L374.88,158.6L377.62,155.8L380.38,158.6L383.12,155.8L385.88,158.6L388.62,155.8L391.38,158.6L394.12,155.8L396.88,158.6L399.62,155.8L402.38,158.6L405.12,155.8L407.88,158.6L410.62,155.8L413.38,158.6L416.12,155.8L418.88,158.6L421.62,155.8L424.38,158.6L427.12,155.8L429.88,158.6L432.62,155.8L435.38,158.6L438.12,155.8L440.88,158.6L443.62,155.8L446.38,158.6L449.12,155.8L451.88,158.6L454.62,155.8L457.38,158.6L460.12,155.8L462.88,158.6L465.62,155.8L468.38,158.6L471.12,155.8L473.88,158.6L476.62,155.8L479.38,158.6L482.12,155.8L484.88,158.6L487.62,155.8L490.38,158.6L493.12,155.8L495.88,158.6L498.62,155.8L501.38,158.6L504.12,155.8L506.88,158.6L509.62,155.8L512.38,158.6L515.12,155.8L517.88,158.6L520.62,155.8L523.38,158.6L526.12,155.8L528.88,158.6L531.62,155.8L534.38,158.6L537.12,155.8L539.88,158.6L542.62,155.8L545.38,158.6L548.12,155.8L550.88,158.6L553.62,155.8L556.38,158.6L559.12,155.8L561.88,158.6L564.62,155.8L567.38,158.6L570.12,155.8L572.88,158.6L575.62,155.8L578.38,158.6L581.12,155.8L583.88,158.6L586.62,155.8L589.38,158.6L592.12,155.8L594.88,158.6L597.62,155.8L600.38,158.6L603.12,155.8L605.88,158.6L608.62,155.8L611.38,158.6L614.12,155.8L616.88,158.6L619.62,155.8L622.38,158.6L625.12,155.8L627.88,158.6L630.62,155.8L633.38,158.6L636.12,155.8L638.88,158.6L641.62,155.8L644.38,158.6" fill="none" stroke="#c01e28" stroke-width="1"/></svg>
<div class="a" style="left:0px;top:561px;width:1000px;height:2px;background:#e6e6ea;"></div>
<div class="a" style="left:2px;top:563px;width:996px;height:28px;background:#cddff3;"></div>
<svg class="a" style="left:943px;top:572px" width="14" height="10" viewBox="943 572 14 10"><path d="M944.8,576.6 H948.5" stroke="#444" stroke-width="1.1"/><rect x="948.2" y="573.4" width="1.3" height="6.6" fill="#444"/><rect x="949.5" y="574.3" width="4.4" height="4.2" fill="#555"/><rect x="950.3" y="575" width="3" height="1" fill="#cddff3"/></svg>
<svg class="a" style="left:978px;top:573px" width="8" height="8" viewBox="0 0 8 8"><path d="M0.3,0.3 L7.7,7.7 M7.7,0.3 L0.3,7.7" stroke="#4a4a4a" stroke-width="1.2"/></svg>
<div class="a" style="left:2px;top:591px;width:996px;height:28px;background:#ececf0;"></div>
<div class="a" style="left:3px;top:591px;width:74px;height:28px;background:#dcdce0;"></div>
<div class="a" style="left:82px;top:591px;width:95px;height:28px;background:#dcdce0;"></div>
<div class="a" style="left:184px;top:591px;width:94px;height:28px;background:#dcdce0;"></div>
<div class="a" style="left:285px;top:591px;width:148px;height:28px;background:#dcdce0;"></div>
<svg class="a" style="left:12px;top:598px" width="14" height="14" viewBox="0 0 14 14"><circle cx="7" cy="7" r="6.5" fill="#d42a2a" stroke="#ffffff" stroke-width="1"/><path d="M4,4 L10,10 M10,4 L4,10" stroke="#fff" stroke-width="1.8"/></svg>
<svg class="a" style="left:91.5px;top:597.5px" width="14" height="14" viewBox="0 0 14 14"><path d="M7,0.8 L13.5,13 H0.5 Z" fill="#f5c518" stroke="#e0a800" stroke-width="0.8" stroke-linejoin="round"/><rect x="6.2" y="4.5" width="1.6" height="5" fill="#222"/><rect x="6.2" y="10.5" width="1.6" height="1.5" fill="#222"/></svg>
<svg class="a" style="left:192px;top:598px" width="14" height="14" viewBox="0 0 14 14"><circle cx="7" cy="7" r="6.3" fill="none" stroke="#333" stroke-width="1.2"/><rect x="6.3" y="6" width="1.5" height="4.5" fill="#333"/><rect x="6.3" y="3.5" width="1.5" height="1.5" fill="#333"/></svg>
<svg class="a" style="left:294px;top:599px" width="12" height="12" viewBox="0 0 12 12"><path d="M0,0 H12 L7.3,5.5 V12 H4.7 V5.5 Z" fill="#333"/></svg>
<div class="a" style="left:2px;top:619px;width:996px;height:95px;background:#ffffff;border:1px solid #d0d0d4;box-sizing:border-box;"></div>
<div class="a" style="left:3px;top:620px;width:994px;height:25px;background:#f6f6f8;"></div>
<div class="a" style="left:3px;top:644px;width:994px;height:1px;background:#e0e0e4;"></div>
<div class="a" style="left:77px;top:620px;width:1px;height:25px;background:#dcdce0;"></div>
<div class="a" style="left:152px;top:620px;width:1px;height:25px;background:#dcdce0;"></div>
<div class="a" style="left:494px;top:620px;width:1px;height:25px;background:#dcdce0;"></div>
<div class="a" style="left:695px;top:620px;width:1px;height:25px;background:#dcdce0;"></div>
<div class="a" style="left:833px;top:620px;width:1px;height:25px;background:#dcdce0;"></div>
<div class="a" style="left:3px;top:645px;width:994px;height:20px;background:#0078d7;"></div>
<div class="a" style="left:77px;top:645px;width:1px;height:20px;background:#7ab3e8;"></div>
<div class="a" style="left:152px;top:645px;width:1px;height:20px;background:#7ab3e8;"></div>
<div class="a" style="left:494px;top:645px;width:1px;height:20px;background:#7ab3e8;"></div>
<div class="a" style="left:695px;top:645px;width:1px;height:20px;background:#7ab3e8;"></div>
<div class="a" style="left:833px;top:645px;width:1px;height:20px;background:#7ab3e8;"></div>
<svg class="a" style="left:9px;top:647px" width="16" height="16" viewBox="0 0 16 16"><circle cx="8" cy="8" r="7.5" fill="#d42a2a" stroke="#ffffff" stroke-width="1"/><path d="M5,5 L11,11 M11,5 L5,11" stroke="#fff" stroke-width="1.8"/></svg>
<div class="a" style="left:0px;top:714px;width:1000px;height:30px;background:#ececf0;"></div>
<div class="a" style="left:84px;top:718px;width:85px;height:26px;background:#cfe0f4;"></div>
<svg class="a" style="left:17px;top:725px" width="14" height="14" viewBox="0 0 14 14"><path d="M4.5,3.5 V0.6 H0.6 V13.4 H4.5 V10.5" fill="none" stroke="#333" stroke-width="1.2"/><path d="M4,7 H12 M8.5,3.5 L12,7 L8.5,10.5" fill="none" stroke="#333" stroke-width="1.6"/></svg>
<svg class="a" style="left:98px;top:724.5px" width="15" height="16" viewBox="0 0 15 16"><path d="M3,3.6 H0.6 V14.4 H8 M11.4,7 V3.6 H9" fill="none" stroke="#333" stroke-width="1.1"/><rect x="3.5" y="1.5" width="5" height="3" fill="none" stroke="#333" stroke-width="1.1"/><circle cx="10.5" cy="11.5" r="4" fill="#d42a2a"/><path d="M8.8,9.8 L12.2,13.2 M12.2,9.8 L8.8,13.2" stroke="#fff" stroke-width="1.2"/></svg>
<div class="a" style="left:0px;top:744px;width:1000px;height:28px;background:#f3f3f3;"></div>
<svg class="a" style="left:984px;top:756px" width="12" height="12" viewBox="0 0 12 12"><g fill="#c8c8cc"><rect x="9" y="1" width="2" height="2"/><rect x="6" y="4" width="2" height="2"/><rect x="9" y="4" width="2" height="2"/><rect x="3" y="7" width="2" height="2"/><rect x="6" y="7" width="2" height="2"/><rect x="9" y="7" width="2" height="2"/></g></svg>
<div class="a t" style="left:42px;top:7.84px;font:12px 'Liberation Sans';color:#404040;transform:scaleX(0.9361);transform-origin:0 0;">File</div>
<div class="a t" style="left:72.8px;top:7.84px;font:12px 'Liberation Sans';color:#404040;transform:scaleX(0.9430);transform-origin:0 0;">Edit</div>
<div class="a t" style="left:105.6px;top:7.84px;font:12px 'Liberation Sans';color:#404040;transform:scaleX(0.9615);transform-origin:0 0;">View</div>
<div class="a t" style="left:143.3px;top:7.84px;font:12px 'Liberation Sans';color:#404040;transform:scaleX(0.9500);transform-origin:0 0;">Database</div>
<div class="a t" style="left:204.6px;top:7.84px;font:12px 'Liberation Sans';color:#404040;transform:scaleX(1.0078);transform-origin:0 0;">Comparison</div>
<div class="a t" style="left:282.3px;top:7.84px;font:12px 'Liberation Sans';color:#404040;transform:scaleX(0.9547);transform-origin:0 0;">Data</div>
<div class="a t" style="left:319px;top:7.84px;font:12px 'Liberation Sans';color:#404040;transform:scaleX(0.9079);transform-origin:0 0;">SQL</div>
<div class="a t" style="left:353.3px;top:7.84px;font:12px 'Liberation Sans';color:#404040;transform:scaleX(1.0174);transform-origin:0 0;">Tools</div>
<div class="a t" style="left:394.3px;top:7.84px;font:12px 'Liberation Sans';color:#404040;transform:scaleX(1.0427);transform-origin:0 0;">Window</div>
<div class="a t" style="left:451px;top:7.84px;font:12px 'Liberation Sans';color:#404040;transform:scaleX(1.0373);transform-origin:0 0;">Help</div>
<div class="a t" style="left:747px;top:9.78px;font:9px 'Liberation Sans';color:#f4fff4;transform:scaleX(0.9140);transform-origin:0 0;">JS</div>
<div class="a t" style="left:764px;top:7.84px;font:12px 'Liberation Sans';color:#404040;transform:scaleX(0.9369);transform-origin:0 0;">Jordan  Sanders</div>
<div class="a t" style="left:44.4px;top:36.84px;font:12px 'Liberation Sans';color:#404040;transform:scaleX(0.9289);transform-origin:0 0;">New SQL</div>
<div class="a t" style="left:55.6px;top:64.84px;font:12px 'Liberation Sans';color:#404040;transform:scaleX(1.0081);transform-origin:0 0;">Connection</div>
<div class="a t" style="left:146.4px;top:64.84px;font:12px 'Liberation Sans';color:#1e1e1e;transform:scaleX(0.9388);transform-origin:0 0;">postgres.localhost</div>
<div class="a t" style="left:400px;top:64.84px;font:12px 'Liberation Sans';color:#404040;transform:scaleX(0.9403);transform-origin:0 0;">Database</div>
<div class="a t" style="left:477.7px;top:64.84px;font:12px 'Liberation Sans';color:#1e1e1e;transform:scaleX(0.8992);transform-origin:0 0;">pagila</div>
<div class="a t" style="left:782.7px;top:69.96px;font:9.5px 'Liberation Sans';color:#222;transform:scaleX(0.7943);transform-origin:0 0;">SQL</div>
<div class="a t" style="left:44.7px;top:92.84px;font:12px 'Liberation Sans';color:#9a9a9e;transform:scaleX(0.9456);transform-origin:0 0;">Execute</div>
<div class="a t" style="left:11.7px;top:122.84px;font:bold 12px 'Liberation Sans';color:#3a3a3a;transform:scaleX(0.9823);transform-origin:0 0;">Database Explorer - postgres.localhost</div>
<div class="a t" style="left:45px;top:173.84px;font:12px 'Liberation Sans';color:#1e1e1e;transform:scaleX(0.9286);transform-origin:0 0;">postgres.dbfmylast:5439</div>
<div class="a t" style="left:45px;top:190.84px;font:12px 'Liberation Sans';color:#1e1e1e;transform:scaleX(0.9322);transform-origin:0 0;">mydatabase.192.168.0.1081</div>
<div class="a t" style="left:45px;top:207.84px;font:12px 'Liberation Sans';color:#1e1e1e;transform:scaleX(0.9202);transform-origin:0 0;">postgres.localhost</div>
<div class="a t" style="left:63.6px;top:224.84px;font:12px 'Liberation Sans';color:#1e1e1e;transform:scaleX(0.8992);transform-origin:0 0;">pagila</div>
<div class="a t" style="left:82.9px;top:241.84px;font:12px 'Liberation Sans';color:#1e1e1e;transform:scaleX(0.8654);transform-origin:0 0;">System Schemas</div>
<div class="a t" style="left:82.9px;top:258.84px;font:12px 'Liberation Sans';color:#1e1e1e;transform:scaleX(0.8867);transform-origin:0 0;">public</div>
<div class="a t" style="left:101.4px;top:275.84px;font:12px 'Liberation Sans';color:#1e1e1e;transform:scaleX(0.9232);transform-origin:0 0;">Tables (15)</div>
<div class="a t" style="left:101.4px;top:292.84px;font:12px 'Liberation Sans';color:#1e1e1e;transform:scaleX(0.8744);transform-origin:0 0;">Views</div>
<div class="a t" style="left:101.4px;top:309.84px;font:12px 'Liberation Sans';color:#1e1e1e;transform:scaleX(0.8796);transform-origin:0 0;">Materialized Views</div>
<div class="a t" style="left:101.4px;top:326.84px;font:12px 'Liberation Sans';color:#1e1e1e;transform:scaleX(0.8930);transform-origin:0 0;">Procedures</div>
<div class="a t" style="left:101.4px;top:343.84px;font:12px 'Liberation Sans';color:#1e1e1e;transform:scaleX(0.9111);transform-origin:0 0;">Functions (9)</div>
<div class="a t" style="left:100.5px;top:359.65px;font:14px 'Liberation Serif';color:#2a2a2a;font-style:italic;letter-spacing:0.3px;">fx</div>
<div class="a t" style="left:120.8px;top:360.84px;font:12px 'Liberation Sans';color:#1e1e1e;transform:scaleX(0.9132);transform-origin:0 0;">_group_concat</div>
<div class="a t" style="left:100.5px;top:376.65px;font:14px 'Liberation Serif';color:#2a2a2a;font-style:italic;letter-spacing:0.3px;">fx</div>
<div class="a t" style="left:120.8px;top:377.84px;font:12px 'Liberation Sans';color:#1e1e1e;transform:scaleX(0.8853);transform-origin:0 0;">film_in_stock</div>
<div class="a t" style="left:100.5px;top:393.65px;font:14px 'Liberation Serif';color:#2a2a2a;font-style:italic;letter-spacing:0.3px;">fx</div>
<div class="a t" style="left:120.8px;top:394.84px;font:12px 'Liberation Sans';color:#1e1e1e;transform:scaleX(0.9039);transform-origin:0 0;">film_not_in_stock</div>
<div class="a t" style="left:100.5px;top:410.65px;font:14px 'Liberation Serif';color:#2a2a2a;font-style:italic;letter-spacing:0.3px;">fx</div>
<div class="a t" style="left:120.8px;top:411.84px;font:12px 'Liberation Sans';color:#1e1e1e;transform:scaleX(0.9044);transform-origin:0 0;">get_customer_balance</div>
<div class="a t" style="left:100.5px;top:427.65px;font:14px 'Liberation Serif';color:#2a2a2a;font-style:italic;letter-spacing:0.3px;">fx</div>
<div class="a t" style="left:120.8px;top:428.84px;font:12px 'Liberation Sans';color:#1e1e1e;transform:scaleX(0.9112);transform-origin:0 0;">inventory_held_by_customer</div>
<div class="a t" style="left:100.5px;top:444.65px;font:14px 'Liberation Serif';color:#2a2a2a;font-style:italic;letter-spacing:0.3px;">fx</div>
<div class="a t" style="left:120.8px;top:445.84px;font:12px 'Liberation Sans';color:#1e1e1e;transform:scaleX(0.9237);transform-origin:0 0;">inventory_in_stock</div>
<div class="a t" style="left:100.5px;top:461.65px;font:14px 'Liberation Serif';color:#2a2a2a;font-style:italic;letter-spacing:0.3px;">fx</div>
<div class="a t" style="left:120.8px;top:462.84px;font:12px 'Liberation Sans';color:#1e1e1e;transform:scaleX(0.9352);transform-origin:0 0;">last_day</div>
<div class="a t" style="left:120.8px;top:479.84px;font:12px 'Liberation Sans';color:#1e1e1e;transform:scaleX(0.9058);transform-origin:0 0;">most_rented_films</div>
<div class="a t" style="left:100.5px;top:495.65px;font:14px 'Liberation Serif';color:#2a2a2a;font-style:italic;letter-spacing:0.3px;">fx</div>
<div class="a t" style="left:120.8px;top:496.84px;font:12px 'Liberation Sans';color:#1e1e1e;transform:scaleX(0.9393);transform-origin:0 0;">rewards_report</div>
<div class="a t" style="left:101.4px;top:513.84px;font:12px 'Liberation Sans';color:#1e1e1e;transform:scaleX(0.9018);transform-origin:0 0;">Trigger Functions</div>
<div class="a t" style="left:101.4px;top:530.84px;font:12px 'Liberation Sans';color:#1e1e1e;transform:scaleX(0.8793);transform-origin:0 0;">Sequences</div>
<div class="a t" style="left:101.4px;top:547.84px;font:12px 'Liberation Sans';color:#1e1e1e;transform:scaleX(0.9193);transform-origin:0 0;">Data Types</div>
<div class="a t" style="left:325.5px;top:122.84px;font:bold 12px 'Liberation Sans';color:#3a3a3a;transform:scaleX(1.0075);transform-origin:0 0;">Start Page</div>
<div class="a t" style="left:446.2px;top:122.84px;font:bold 12px 'Liberation Sans';color:#3a3a3a;transform:scaleX(0.9403);transform-origin:0 0;">SQL3.sql*</div>
<div class="a t" style="left:561.2px;top:122.84px;font:bold 12px 'Liberation Sans';color:#3a3a3a;transform:scaleX(0.9403);transform-origin:0 0;">SQL2.sql*</div>
<div class="a t" style="left:676.2px;top:122.84px;font:bold 12px 'Liberation Sans';color:#3a3a3a;transform:scaleX(0.9403);transform-origin:0 0;">SQL1.sql*</div>
<div class="a t" style="left:335.3px;top:146.11px;font:11.6px 'Liberation Mono';color:#2323b8;letter-spacing:0.040px;">CREATE</div>
<div class="a t" style="left:384.3px;top:146.11px;font:11.6px 'Liberation Mono';color:#8c8c8c;letter-spacing:0.040px;">OR</div>
<div class="a t" style="left:405.3px;top:146.11px;font:11.6px 'Liberation Mono';color:#2323b8;letter-spacing:0.040px;">REPLACE</div>
<div class="a t" style="left:461.3px;top:146.11px;font:11.6px 'Liberation Mono';color:#2323b8;letter-spacing:0.040px;">FUNCTION</div>
<div class="a t" style="left:524.3px;top:146.11px;font:11.6px 'Liberation Mono';color:#000000;letter-spacing:0.040px;">most_rented_films </div>
<div class="a t" style="left:650.3px;top:146.11px;font:11.6px 'Liberation Mono';color:#8c8c8c;letter-spacing:0.040px;">(</div>
<div class="a t" style="left:657.3px;top:146.11px;font:11.6px 'Liberation Mono';color:#000000;letter-spacing:0.040px;">start_date </div>
<div class="a t" style="left:734.3px;top:146.11px;font:11.6px 'Liberation Mono';color:#a47c68;letter-spacing:0.040px;">DATE</div>
<div class="a t" style="left:762.3px;top:146.11px;font:11.6px 'Liberation Mono';color:#8c8c8c;letter-spacing:0.040px;">,</div>
<div class="a t" style="left:335.3px;top:161.11px;font:11.6px 'Liberation Mono';color:#000000;letter-spacing:0.040px;">end_date </div>
<div class="a t" style="left:398.3px;top:161.11px;font:11.6px 'Liberation Mono';color:#a47c68;letter-spacing:0.040px;">DATE</div>
<div class="a t" style="left:426.3px;top:161.11px;font:11.6px 'Liberation Mono';color:#8c8c8c;letter-spacing:0.040px;">)</div>
<div class="a t" style="left:440.3px;top:161.11px;font:11.6px 'Liberation Mono';color:#2323b8;letter-spacing:0.040px;">RETURNS</div>
<div class="a t" style="left:496.3px;top:161.11px;font:11.6px 'Liberation Mono';color:#2323b8;letter-spacing:0.040px;">TABLE</div>
<div class="a t" style="left:538.3px;top:161.11px;font:11.6px 'Liberation Mono';color:#8c8c8c;letter-spacing:0.040px;">(</div>
<div class="a t" style="left:349.3px;top:176.11px;font:11.6px 'Liberation Mono';color:#000000;letter-spacing:0.040px;">film_id </div>
<div class="a t" style="left:405.3px;top:176.11px;font:11.6px 'Liberation Mono';color:#a47c68;letter-spacing:0.040px;">INT</div>
<div class="a t" style="left:426.3px;top:176.11px;font:11.6px 'Liberation Mono';color:#8c8c8c;letter-spacing:0.040px;">,</div>
<div class="a t" style="left:349.3px;top:191.11px;font:11.6px 'Liberation Mono';color:#000000;letter-spacing:0.040px;">film_title </div>
<div class="a t" style="left:426.3px;top:191.11px;font:11.6px 'Liberation Mono';color:#a47c68;letter-spacing:0.040px;">VARCHAR</div>
<div class="a t" style="left:475.3px;top:191.11px;font:11.6px 'Liberation Mono';color:#8c8c8c;letter-spacing:0.040px;">(</div>
<div class="a t" style="left:482.3px;top:191.11px;font:11.6px 'Liberation Mono';color:#000000;letter-spacing:0.040px;">255</div>
<div class="a t" style="left:503.3px;top:191.11px;font:11.6px 'Liberation Mono';color:#8c8c8c;letter-spacing:0.040px;">)</div>
<div class="a t" style="left:510.3px;top:191.11px;font:11.6px 'Liberation Mono';color:#8c8c8c;letter-spacing:0.040px;">,</div>
<div class="a t" style="left:349.3px;top:206.11px;font:11.6px 'Liberation Mono';color:#000000;letter-spacing:0.040px;">rental_count </div>
<div class="a t" style="left:440.3px;top:206.11px;font:11.6px 'Liberation Mono';color:#a47c68;letter-spacing:0.040px;">INT</div>
<div class="a t" style="left:335.3px;top:221.11px;font:11.6px 'Liberation Mono';color:#8c8c8c;letter-spacing:0.040px;">)</div>
<div class="a t" style="left:335.3px;top:236.11px;font:11.6px 'Liberation Mono';color:#2323b8;letter-spacing:0.040px;">AS</div>
<div class="a t" style="left:335.3px;top:251.11px;font:11.6px 'Liberation Mono';color:#c8141e;letter-spacing:0.040px;">$func$</div>
<div class="a t" style="left:335.3px;top:266.11px;font:11.6px 'Liberation Mono';color:#c8141e;letter-spacing:0.040px;">BEGIN</div>
<div class="a t" style="left:363.3px;top:296.11px;font:11.6px 'Liberation Mono';color:#c8141e;letter-spacing:0.040px;">RETURN QUERY</div>
<div class="a t" style="left:363.3px;top:311.11px;font:11.6px 'Liberation Mono';color:#c8141e;letter-spacing:0.040px;">SELECT</div>
<div class="a t" style="left:391.3px;top:326.11px;font:11.6px 'Liberation Mono';color:#c8141e;letter-spacing:0.040px;">f.film_id,</div>
<div class="a t" style="left:391.3px;top:341.11px;font:11.6px 'Liberation Mono';color:#c8141e;letter-spacing:0.040px;">f.film_title,</div>
<div class="a t" style="left:391.3px;top:356.11px;font:11.6px 'Liberation Mono';color:#c8141e;letter-spacing:0.040px;">COUNT(*) AS rental_count</div>
<div class="a t" style="left:363.3px;top:371.11px;font:11.6px 'Liberation Mono';color:#c8141e;letter-spacing:0.040px;">FROM</div>
<div class="a t" style="left:391.3px;top:386.11px;font:11.6px 'Liberation Mono';color:#c8141e;letter-spacing:0.040px;">film_rentals fr</div>
<div class="a t" style="left:363.3px;top:401.11px;font:11.6px 'Liberation Mono';color:#c8141e;letter-spacing:0.040px;">JOIN</div>
<div class="a t" style="left:391.3px;top:416.11px;font:11.6px 'Liberation Mono';color:#c8141e;letter-spacing:0.040px;">films f ON f.film_id = fr.film_id</div>
<div class="a t" style="left:363.3px;top:431.11px;font:11.6px 'Liberation Mono';color:#c8141e;letter-spacing:0.040px;">WHERE</div>
<div class="a t" style="left:391.3px;top:446.11px;font:11.6px 'Liberation Mono';color:#c8141e;letter-spacing:0.040px;">fr.rental_date &gt;= start_date</div>
<div class="a t" style="left:391.3px;top:461.11px;font:11.6px 'Liberation Mono';color:#c8141e;letter-spacing:0.040px;">AND fr.rental_date &lt; end_date</div>
<div class="a t" style="left:363.3px;top:476.11px;font:11.6px 'Liberation Mono';color:#c8141e;letter-spacing:0.040px;">GROUP BY</div>
<div class="a t" style="left:391.3px;top:491.11px;font:11.6px 'Liberation Mono';color:#c8141e;letter-spacing:0.040px;">f.film_id,</div>
<div class="a t" style="left:391.3px;top:506.11px;font:11.6px 'Liberation Mono';color:#c8141e;letter-spacing:0.040px;">f.film_title</div>
<div class="a t" style="left:363.3px;top:521.11px;font:11.6px 'Liberation Mono';color:#c8141e;letter-spacing:0.040px;">ORDER BY</div>
<div class="a t" style="left:391.3px;top:536.11px;font:11.6px 'Liberation Mono';color:#c8141e;letter-spacing:0.040px;">rental_count DESC;</div>
<div class="a t" style="left:11.6px;top:569.84px;font:bold 12px 'Liberation Sans';color:#2f3a48;transform:scaleX(0.9498);transform-origin:0 0;">Error List</div>
<div class="a t" style="left:32px;top:597.84px;font:12px 'Liberation Sans';color:#404040;transform:scaleX(0.9092);transform-origin:0 0;">1 Errors</div>
<div class="a t" style="left:111px;top:597.84px;font:12px 'Liberation Sans';color:#404040;transform:scaleX(0.9860);transform-origin:0 0;">0 Warnings</div>
<div class="a t" style="left:211.2px;top:597.84px;font:12px 'Liberation Sans';color:#404040;transform:scaleX(0.9397);transform-origin:0 0;">0 Messages</div>
<div class="a t" style="left:312px;top:597.84px;font:12px 'Liberation Sans';color:#404040;transform:scaleX(0.9960);transform-origin:0 0;">1 In Active Document</div>
<div class="a t" style="left:446px;top:597.84px;font:12px 'Liberation Sans';color:#404040;transform:scaleX(0.9822);transform-origin:0 0;">1 of 1 items displayed</div>
<div class="a t" style="left:159px;top:624.84px;font:12px 'Liberation Sans';color:#404040;transform:scaleX(0.8880);transform-origin:0 0;">Description</div>
<div class="a t" style="left:499.2px;top:624.84px;font:12px 'Liberation Sans';color:#404040;transform:scaleX(0.8772);transform-origin:0 0;">Location</div>
<div class="a t" style="left:701.8px;top:624.84px;font:12px 'Liberation Sans';color:#404040;transform:scaleX(0.8948);transform-origin:0 0;">Line</div>
<div class="a t" style="left:839.4px;top:624.84px;font:12px 'Liberation Sans';color:#404040;transform:scaleX(0.8658);transform-origin:0 0;">Column</div>
<div class="a t" style="left:143.5px;top:648.34px;font:12px 'Liberation Sans';color:#ffffff;">1</div>
<div class="a t" style="left:159.6px;top:648.34px;font:12px 'Liberation Sans';color:#ffffff;transform:scaleX(0.8972);transform-origin:0 0;">no schema has been selected to create in</div>
<div class="a t" style="left:500px;top:648.34px;font:12px 'Liberation Sans';color:#ffffff;transform:scaleX(0.8671);transform-origin:0 0;">SQL1.sql</div>
<div class="a t" style="left:821.5px;top:648.34px;font:12px 'Liberation Sans';color:#ffffff;">1</div>
<div class="a t" style="left:985.7px;top:648.34px;font:12px 'Liberation Sans';color:#ffffff;">1</div>
<div class="a t" style="left:33.6px;top:724.84px;font:12px 'Liberation Sans';color:#404040;transform:scaleX(0.9660);transform-origin:0 0;">Output</div>
<div class="a t" style="left:113.6px;top:724.84px;font:12px 'Liberation Sans';color:#404040;transform:scaleX(0.8999);transform-origin:0 0;">Error List</div>
</body></html>
